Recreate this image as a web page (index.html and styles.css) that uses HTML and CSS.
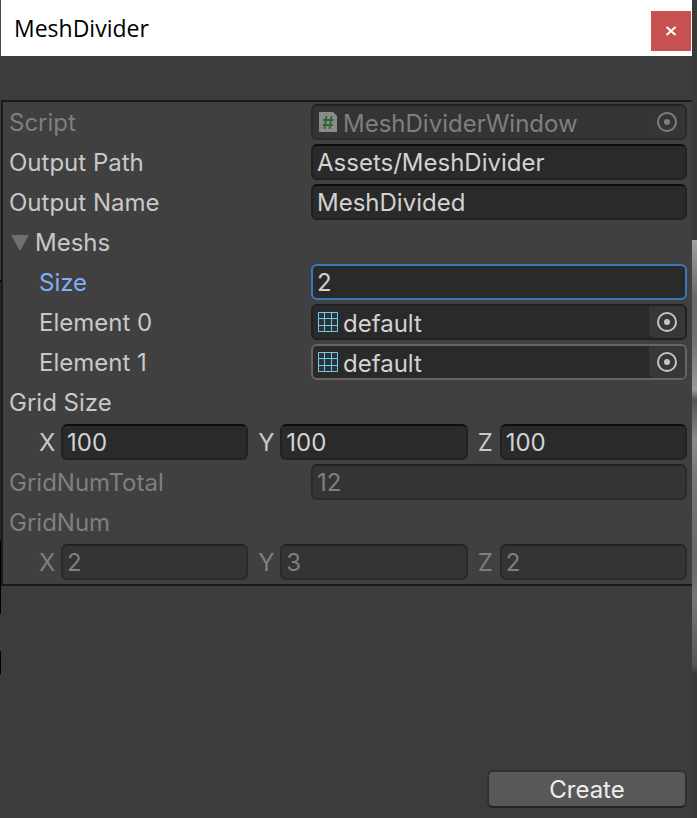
FILE: index.html
```html
<!DOCTYPE html>
<html lang="en">
<head>
<meta charset="utf-8">
<title>MeshDivider</title>
<meta name="viewport" content="width=device-width, initial-scale=1">
<link rel="stylesheet" href="styles.css">
</head>
<body>
<svg class="defs" aria-hidden="true">
  <symbol id="picker" viewBox="0 0 20 20"><circle cx="10" cy="10" r="9" fill="none" stroke="currentColor" stroke-width="2"/><circle cx="10" cy="10" r="3" fill="currentColor"/></symbol>
  <symbol id="mesh" viewBox="0 0 20 20"><path d="M1 1h18v18H1z" fill="#2b3337"/><path d="M.5.5h19v19H.5zM6.500.5v19M13.500.5v19M.5 6.500h19M.5 13.500h19" fill="none" stroke="#76c8ec" stroke-width="1"/></symbol>
</svg>
<div class="scene-left"></div>
<main class="window">
  <header class="titlebar">
    <h1 class="title">MeshDivider</h1>
    <button class="close" type="button" aria-label="Close"><svg width="12" height="10" viewBox="0 0 12 10"><path d="M1.500 1l9 8M10.500 1l-9 8" stroke="#fff" stroke-width="2"/></svg></button>
  </header>
  <form class="body">
    <div class="panel">
      <div class="row disabled">
        <label for="script">Script</label>
        <div class="object">
          <svg class="icon" viewBox="0 0 20 20"><path d="M2 0h13l4 4v16H2q-1 0-1-1V1q0-1 1-1z" fill="#8b8b8b"/><path d="M8.500 4L6.500 17M13.500 4l-2 13M5 8h10.500M4.500 13H15" fill="none" stroke="#2c6638" stroke-width="1.800"/></svg>
          <input id="script" class="object-name" value="MeshDividerWindow" disabled>
          <button class="pick" type="button" disabled aria-label="Select script"><svg><use href="#picker"/></svg></button>
        </div>
      </div>
      <div class="row">
        <label for="path">Output Path</label>
        <input id="path" class="field" value="Assets/MeshDivider">
      </div>
      <div class="row">
        <label for="name">Output Name</label>
        <input id="name" class="field" value="MeshDivided">
      </div>
      <div class="row">
        <button class="foldout" type="button" aria-expanded="true"><svg viewBox="0 0 18 16"><path d="M0 0h18L9 16z" fill="#707070"/></svg>Meshs</button>
      </div>
      <div class="row nested active">
        <label for="size">Size</label>
        <input id="size" class="field" value="2">
      </div>
      <div class="row nested">
        <label for="e0">Element 0</label>
        <div class="object">
          <svg class="icon"><use href="#mesh"/></svg>
          <input id="e0" class="object-name" value="default" readonly>
          <button class="pick" type="button" aria-label="Select mesh 0"><svg><use href="#picker"/></svg></button>
        </div>
      </div>
      <div class="row nested">
        <label for="e1">Element 1</label>
        <div class="object hovered">
          <svg class="icon"><use href="#mesh"/></svg>
          <input id="e1" class="object-name" value="default" readonly>
          <button class="pick" type="button" aria-label="Select mesh 1"><svg><use href="#picker"/></svg></button>
        </div>
      </div>
      <div class="row"><span>Grid Size</span></div>
      <div class="vector">
        <div class="axis"><label for="gx">X</label><input id="gx" class="field" value="100"></div>
        <div class="axis"><label for="gy">Y</label><input id="gy" class="field" value="100"></div>
        <div class="axis"><label for="gz">Z</label><input id="gz" class="field" value="100"></div>
      </div>
      <div class="row disabled">
        <label for="total">GridNumTotal</label>
        <input id="total" class="field" value="12" disabled>
      </div>
      <div class="row disabled"><span>GridNum</span></div>
      <div class="vector disabled">
        <div class="axis"><label for="nx">X</label><input id="nx" class="field" value="2" disabled></div>
        <div class="axis"><label for="ny">Y</label><input id="ny" class="field" value="3" disabled></div>
        <div class="axis"><label for="nz">Z</label><input id="nz" class="field" value="2" disabled></div>
      </div>
    </div>
    <footer class="actions"><button class="create" type="button">Create</button></footer>
  </form>
</main>
<div class="scene-right"></div>
</body>
</html>
```
FILE: styles.css
```css
* { box-sizing: border-box; }

body {
  margin: 0;
  min-height: 100vh;
  display: flex;
  background: #3c3c3c;
  color: #c8c8c8;
  font: 370 24px/36px Inter, "Liberation Sans", sans-serif;
}

.defs { position: absolute; width: 0; height: 0; }

/* Slivers of the scene on both sides of the window */
.scene-left {
  width: 1px;
  background: linear-gradient(#4a4a4a 0 56px, #3a3a3a 56px 280px, #000 280px 282px, #2c251a 282px 540px, #000 540px 614px, #3c3c3c 614px 651px, #000 651px 674px, #3c3c3c 674px);
}

.scene-right {
  width: 5px;
  background: linear-gradient(#3a3a3a 0 240px, #a0a0a0 240px, #686868 300px, #727272 340px, #999 390px, #555 400px, #8a8a8a 440px, #777 480px, #68686c 560px, #777 600px, #555 665px, #393939 674px);
}

.window { flex: 1; min-width: 0; display: flex; flex-direction: column; }

.titlebar {
  height: 56px;
  padding: 0 1px 0 13px;
  display: flex;
  align-items: center;
  justify-content: space-between;
  background: #fff;
}

.title {
  margin: 0;
  color: #000;
  font: 400 23px/32px "Open Sans", "Noto Sans", sans-serif;
}

button, input { font: inherit; color: inherit; }
button { border: 0; padding: 0; background: none; }

.close {
  width: 40px;
  height: 40px;
  margin-top: 6px;
  display: grid;
  place-items: center;
  background: #c75050;
}

.body {
  flex: 1;
  padding-top: 44px;
  display: flex;
  flex-direction: column;
  justify-content: space-between;
}

.panel {
  padding: 2px 5px 4px 6px;
  display: grid;
  gap: 4px;
  border: solid #1a1a1a;
  border-width: 2px 0 2px 2px;
  background: #404040;
}

.row {
  height: 36px;
  display: grid;
  grid-template-columns: 302fr 376fr;
}

.row, .axis { line-height: 38px; }

.nested label { padding-left: 30px; }
.active label { color: #7faef9; }
.disabled { color: #7f7f7f; }

.field, .object {
  width: 100%;
  min-width: 0;
  height: 36px;
  border: 2px solid #212121;
  border-radius: 6px;
  outline: 0;
  background: #2a2a2a;
  color: #d2d2d2;
}

.field { padding: 2px 4px 0; border-top-color: #0d0d0d; }
.active .field { border-color: #3a79bb; }

.disabled .field, .disabled .object {
  border-color: #2a2a2a;
  border-top-color: #222;
  background: #343434;
  color: #7f7f7f;
}

.object { display: flex; align-items: center; padding-left: 5px; }
.object.hovered { border-color: #656565; }
.icon { width: 20px; height: 20px; flex: none; }

.object-name {
  flex: 1;
  min-width: 0;
  height: 32px;
  padding: 3px 0 0 5px;
  border: 0;
  outline: 0;
  background: none;
}

.pick {
  width: 36px;
  height: 32px;
  display: grid;
  place-items: center;
  border-radius: 0 4px 4px 6px;
  background: #373737;
  color: #c4c4c4;
}

.pick svg { width: 20px; height: 20px; }
.disabled .pick { background: #353535; color: #7f7f7f; }

.foldout { display: flex; align-items: center; gap: 6px; padding-left: 2px; }
.foldout svg { width: 18px; height: 16px; }

.vector {
  padding-left: 30px;
  display: grid;
  grid-template-columns: repeat(3, 1fr);
  gap: 10px;
}

.axis { height: 36px; display: grid; grid-template-columns: 22px 1fr; }

.actions { padding: 0 5px 10px; display: flex; justify-content: flex-end; }

.create {
  width: 200px;
  height: 38px;
  border: 2px solid #303030;
  border-bottom-color: #242424;
  border-radius: 6px;
  background: #585858;
  color: #eee;
}
```
